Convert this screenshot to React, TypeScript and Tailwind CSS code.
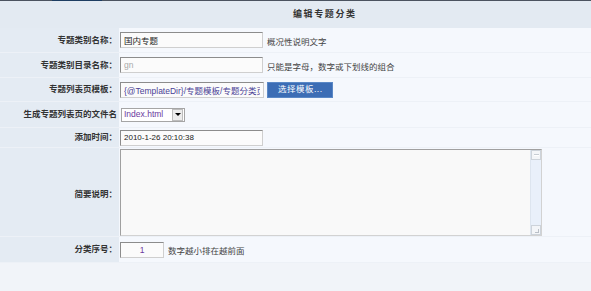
import React from 'react';

const font = { fontFamily: '"Liberation Sans", "Noto Sans CJK SC", sans-serif' };

const inputCls =
  'h-[16px] bg-[#fbfbfb] border border-t-[#8c8c8c] border-l-[#8c8c8c] border-r-[#cfcfcf] border-b-[#cfcfcf] px-[3px] text-[8.5px] outline-none';

const Label: React.FC<{ children: React.ReactNode }> = ({ children }) => (
  <div className="w-[119px] shrink-0 bg-[#e4ebf3] flex items-center justify-end pr-[2px] text-[8.5px] font-bold text-[#333] whitespace-nowrap">
    {children}
  </div>
);

const Row: React.FC<{ label: React.ReactNode; h: string; children: React.ReactNode }> = ({ label, h, children }) => (
  <div className={`flex ${h} border-b border-[#edf1f7]`}>
    <Label>{label}</Label>
    <div className="flex-1 flex items-center pl-[1px] bg-[#f5f8fd]">{children}</div>
  </div>
);

const Hint: React.FC<{ children: React.ReactNode }> = ({ children }) => (
  <span className="ml-[4px] mt-[4px] text-[8.5px] text-[#444] whitespace-nowrap">{children}</span>
);

const App: React.FC = () => {
  return (
    <div className="w-[591px] h-[291px] bg-[#f1f4f9] overflow-hidden" style={font}>
      <div className="h-px bg-[#4b5360] flex">
        <div className="ml-[52px] w-[50px] bg-[#1d3d62]" />
      </div>
      <div className="h-[27px] bg-[#e3eaf2] flex items-center pl-[293px] text-[9px] font-bold text-[#333] tracking-[1.6px]">
        编辑专题分类
      </div>

      <Row label="专题类别名称：" h="h-[25px]">
        <input className={`${inputCls} w-[143px] text-[#222]`} defaultValue="国内专题" />
        <Hint>概况性说明文字</Hint>
      </Row>

      <Row label="专题类别目录名称：" h="h-[25px]">
        <input className={`${inputCls} w-[143px] text-[#aaa]`} defaultValue="gn" />
        <Hint>只能是字母，数字或下划线的组合</Hint>
      </Row>

      <Row label="专题列表页模板：" h="h-[24px]">
        <input
          className={`${inputCls} w-[144px] text-[#4a3f96]`}
          defaultValue="{@TemplateDir}/专题模板/专题分类页.html"
        />
        <button className="ml-[3px] h-[16px] w-[66px] bg-[#3c6db5] border border-[#5a88c6] text-white text-[8.5px] text-left pl-[10px] tracking-[0.5px]">
          选择模板...
        </button>
      </Row>

      <Row label="生成专题列表页的文件名" h="h-[26px]">
        <div className="ml-[1px] h-[14px] w-[64px] bg-white border border-[#a5a5a5] flex items-center">
          <span className="flex-1 pl-[2px] text-[8.5px] text-[#6b3a9e]">Index.html</span>
          <span className="w-[11px] h-[12px] mr-px bg-[#ececec] border border-[#bdbdbd] flex items-center justify-center">
            <span className="w-0 h-0 border-l-[3px] border-r-[3px] border-t-[3px] border-l-transparent border-r-transparent border-t-black" />
          </span>
        </div>
      </Row>

      <Row label="添加时间：" h="h-[20px]">
        <input className={`${inputCls} w-[143px] text-[#222] text-[8px]`} defaultValue="2010-1-26 20:10:38" />
      </Row>

      <div className="flex h-[89px] border-b border-[#edf1f7]">
        <Label>
          <span className="mt-[4px]">简要说明：</span>
        </Label>
        <div className="flex-1 bg-[#f5f8fd] pl-[1px] pt-px">
          <div className="w-[422px] h-[87px] flex bg-[#f9f9f9] border border-t-[#a0a0a0] border-l-[#a0a0a0] border-r-[#d2d2d2] border-b-[#d2d2d2]">
            <textarea className="flex-1 bg-transparent outline-none resize-none text-[8.5px]" />
            <div className="w-[11px] flex flex-col bg-[#e9f0fa] border-l border-[#dde5ef]">
              <div className="h-[10px] bg-[#f3f5f8] border border-[#cdd3da] flex items-center justify-center">
                <span className="w-[5px] h-[2px] bg-white border-t border-[#c6ccd3]" />
              </div>
              <div className="flex-1" />
              <div className="h-[10px] bg-[#f3f5f8] border border-[#cdd3da] flex items-end justify-end p-px">
                <span className="w-[4px] h-[4px] border-r border-b border-[#b9bfc7]" />
              </div>
            </div>
          </div>
        </div>
      </div>

      <Row label="分类序号：" h="h-[26px]">
        <input className={`${inputCls} w-[44px] text-center text-[#6b3a9e]`} defaultValue="1" />
        <Hint>数字越小排在越前面</Hint>
      </Row>
    </div>
  );
};

export default App;
